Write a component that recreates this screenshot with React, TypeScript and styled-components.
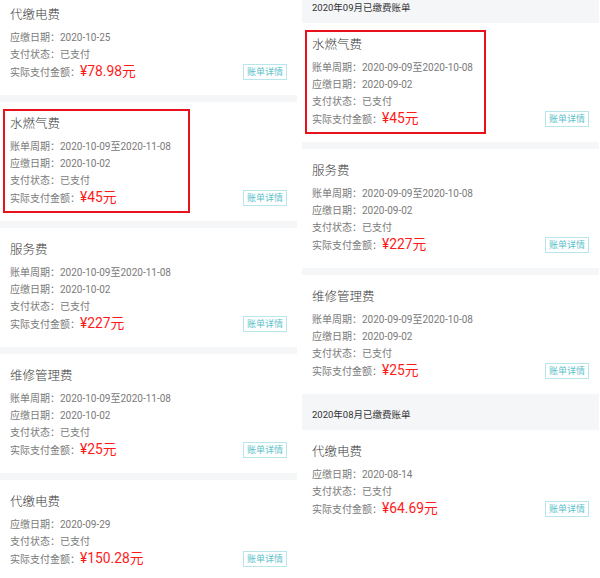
import React from 'react';
import styled, { createGlobalStyle } from 'styled-components';

type Bill = {
    name: string;
    period?: string;
    due: string;
    amount: string;
    marked?: boolean;
};

type Block =
    | { kind: 'header'; text: string }
    | { kind: 'bill'; bill: Bill };

const leftBlocks: Block[] = [
    { kind: 'bill', bill: { name: '代缴电费', due: '2020-10-25', amount: '78.98' } },
    { kind: 'bill', bill: { name: '水燃气费', period: '2020-10-09至2020-11-08', due: '2020-10-02', amount: '45', marked: true } },
    { kind: 'bill', bill: { name: '服务费', period: '2020-10-09至2020-11-08', due: '2020-10-02', amount: '227' } },
    { kind: 'bill', bill: { name: '维修管理费', period: '2020-10-09至2020-11-08', due: '2020-10-02', amount: '25' } },
    { kind: 'bill', bill: { name: '代缴电费', due: '2020-09-29', amount: '150.28' } },
];

const rightBlocks: Block[] = [
    { kind: 'header', text: '2020年09月已缴费账单' },
    { kind: 'bill', bill: { name: '水燃气费', period: '2020-09-09至2020-10-08', due: '2020-09-02', amount: '45', marked: true } },
    { kind: 'bill', bill: { name: '服务费', period: '2020-09-09至2020-10-08', due: '2020-09-02', amount: '227' } },
    { kind: 'bill', bill: { name: '维修管理费', period: '2020-09-09至2020-10-08', due: '2020-09-02', amount: '25' } },
    { kind: 'header', text: '2020年08月已缴费账单' },
    { kind: 'bill', bill: { name: '代缴电费', due: '2020-08-14', amount: '64.69' } },
];

const BillCard = ({ bill, divider, markWidth }: { bill: Bill; divider: boolean; markWidth: number }) => (
    <Card $divider={divider}>
        {bill.marked && <Marker $width={markWidth} />}
        <Title>{bill.name}</Title>
        {bill.period && <Row>账单周期：{bill.period}</Row>}
        <Row>应缴日期：{bill.due}</Row>
        <Row>支付状态：已支付</Row>
        <AmountRow>
            <span>
                实际支付金额：<Amount>¥{bill.amount}元</Amount>
            </span>
            <DetailButton>账单详情</DetailButton>
        </AmountRow>
    </Card>
);

const renderBlocks = (blocks: Block[], markWidth: number) =>
    blocks.map((block, i) => {
        if (block.kind === 'header') {
            return <MonthHeader key={i}>{block.text}</MonthHeader>;
        }
        const next = blocks[i + 1];
        // a card is followed by a grey bar unless a month header comes next
        const divider = !!next && next.kind === 'bill';
        return <BillCard key={i} bill={block.bill} divider={divider} markWidth={markWidth} />;
    });

const App = () => {
    return (
        <>
            <GlobalStyle />
            <Screen>
                <Column $offset={-7}>{renderBlocks(leftBlocks, 187)}</Column>
                <Column $offset={-13}>{renderBlocks(rightBlocks, 181)}</Column>
            </Screen>
        </>
    );
};

const GlobalStyle = createGlobalStyle`
    html, body {
        margin: 0;
        padding: 0;
        background: #ffffff;
    }
    body {
        font-family: Roboto, "Noto Sans CJK SC", "Noto Sans", sans-serif;
    }
`;

const Screen = styled.div`
    display: grid;
    grid-template-columns: 297px 297px;
    column-gap: 5px;
    width: 600px;
    height: 578px;
    overflow: hidden;
    background: #ffffff;
`;

const Column = styled.div<{ $offset: number }>`
    display: flex;
    flex-direction: column;
    margin-top: ${(p) => p.$offset}px;
`;

const MonthHeader = styled.div`
    display: flex;
    align-items: flex-end;
    height: 36px;
    box-sizing: border-box;
    padding: 0 10px 9px;
    background: #f5f6f8;
    color: #333;
    font-size: 9.5px;
`;

const Card = styled.div<{ $divider: boolean }>`
    position: relative;
    display: flex;
    flex-direction: column;
    padding: 12px 10px 15px;
    border-bottom: ${(p) => (p.$divider ? '7px solid #f5f6f8' : 'none')};
`;

const Marker = styled.div<{ $width: number }>`
    position: absolute;
    top: 7px;
    bottom: 8px;
    left: 3px;
    width: ${(p) => p.$width}px;
    border: 2px solid #e8121c;
    box-sizing: border-box;
    pointer-events: none;
`;

const Title = styled.div`
    height: 20px;
    line-height: 20px;
    margin-bottom: 4px;
    color: #3a3a3a;
    font-size: 12.5px;
    font-weight: 300;
`;

const Row = styled.div`
    height: 17px;
    line-height: 17px;
    color: #7a7a7a;
    font-size: 10px;
    white-space: nowrap;
`;

const AmountRow = styled(Row)`
    display: flex;
    justify-content: space-between;
    align-items: center;
`;

const Amount = styled.span`
    color: #ff1a1a;
    font-size: 13.8px;
`;

const DetailButton = styled.div`
    display: flex;
    align-items: center;
    justify-content: center;
    width: 44px;
    height: 16px;
    box-sizing: border-box;
    margin-top: 1px;
    border: 1px solid #b9e6ea;
    color: #5cc2ca;
    font-size: 9px;
    line-height: 1;
`;

export default App;
